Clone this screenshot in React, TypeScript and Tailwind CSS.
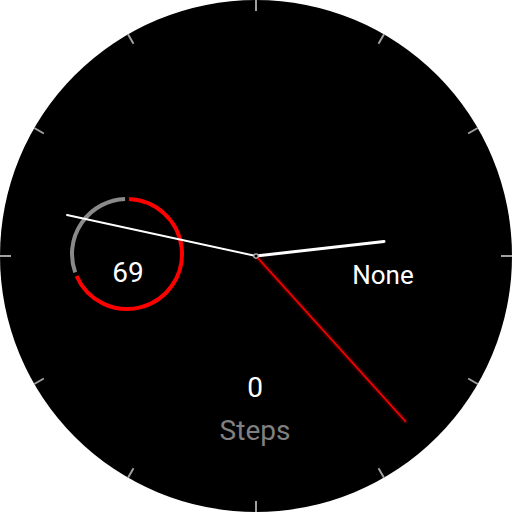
import React from "react";

const CX = 256;
const CY = 256;

function polar(cx: number, cy: number, r: number, deg: number) {
  const a = (deg * Math.PI) / 180;
  return { x: cx + r * Math.sin(a), y: cy - r * Math.cos(a) };
}

function arcPath(cx: number, cy: number, r: number, from: number, to: number) {
  const s = polar(cx, cy, r, from);
  const e = polar(cx, cy, r, to);
  const large = to - from > 180 ? 1 : 0;
  return `M ${s.x} ${s.y} A ${r} ${r} 0 ${large} 1 ${e.x} ${e.y}`;
}

function Ticks() {
  return (
    <>
      {Array.from({ length: 12 }).map((_, i) => {
        const a = polar(CX, CY, 256, i * 30);
        const b = polar(CX, CY, 245, i * 30);
        return (
          <line
            key={i}
            x1={a.x}
            y1={a.y}
            x2={b.x}
            y2={b.y}
            stroke="#a0a0a0"
            strokeWidth={2}
          />
        );
      })}
    </>
  );
}

function BatteryRing({ value }: { value: number }) {
  const cx = 127;
  const cy = 254;
  const r = 55;
  const split = (value / 100) * 360;
  return (
    <>
      <path d={arcPath(cx, cy, r, 2, split - 2)} stroke="#ff0000" strokeWidth={4} fill="none" />
      <path d={arcPath(cx, cy, r, split + 2, 358)} stroke="#8a8a8a" strokeWidth={4} fill="none" />
    </>
  );
}

export default function App() {
  const font = { fontFamily: "Roboto, 'Noto Sans', sans-serif" };
  return (
    <div className="w-[512px] h-[512px] bg-white relative overflow-hidden" style={font}>
      <div className="w-[512px] h-[512px] rounded-full bg-black" />
      <svg className="absolute inset-0" width={512} height={512} viewBox="0 0 512 512">
        <defs>
          <filter id="glow" x="-20%" y="-20%" width="140%" height="140%">
            <feGaussianBlur stdDeviation="1.5" result="b" />
            <feMerge>
              <feMergeNode in="b" />
              <feMergeNode in="SourceGraphic" />
            </feMerge>
          </filter>
        </defs>
        <Ticks />
        <BatteryRing value={69} />
        {/* minute */}
        <line x1={67} y1={215} x2={CX} y2={CY} stroke="#ffffff" strokeWidth={2} strokeLinecap="round" />
        {/* hour */}
        <line x1={CX} y1={CY} x2={384} y2={241.5} stroke="#ffffff" strokeWidth={3} strokeLinecap="round" />
        {/* second */}
        <line x1={CX} y1={CY} x2={406} y2={422} stroke="#ff0000" strokeWidth={1.4} filter="url(#glow)" />
        <circle cx={CX} cy={CY} r={2.2} fill="#000" stroke="#bdbdbd" strokeWidth={1.2} />
      </svg>

      <div className="absolute left-[88px] top-[259px] w-[80px] text-center text-[28px] leading-none text-white">
        69
      </div>
      <div className="absolute left-[323px] top-[262px] w-[120px] text-center text-[26px] leading-none text-white">
        None
      </div>
      <div className="absolute left-[195px] top-[374px] w-[120px] flex flex-col items-center text-[28px] leading-none">
        <span className="text-white">0</span>
        <span className="mt-[15px] text-[#808080]">Steps</span>
      </div>
    </div>
  );
}
